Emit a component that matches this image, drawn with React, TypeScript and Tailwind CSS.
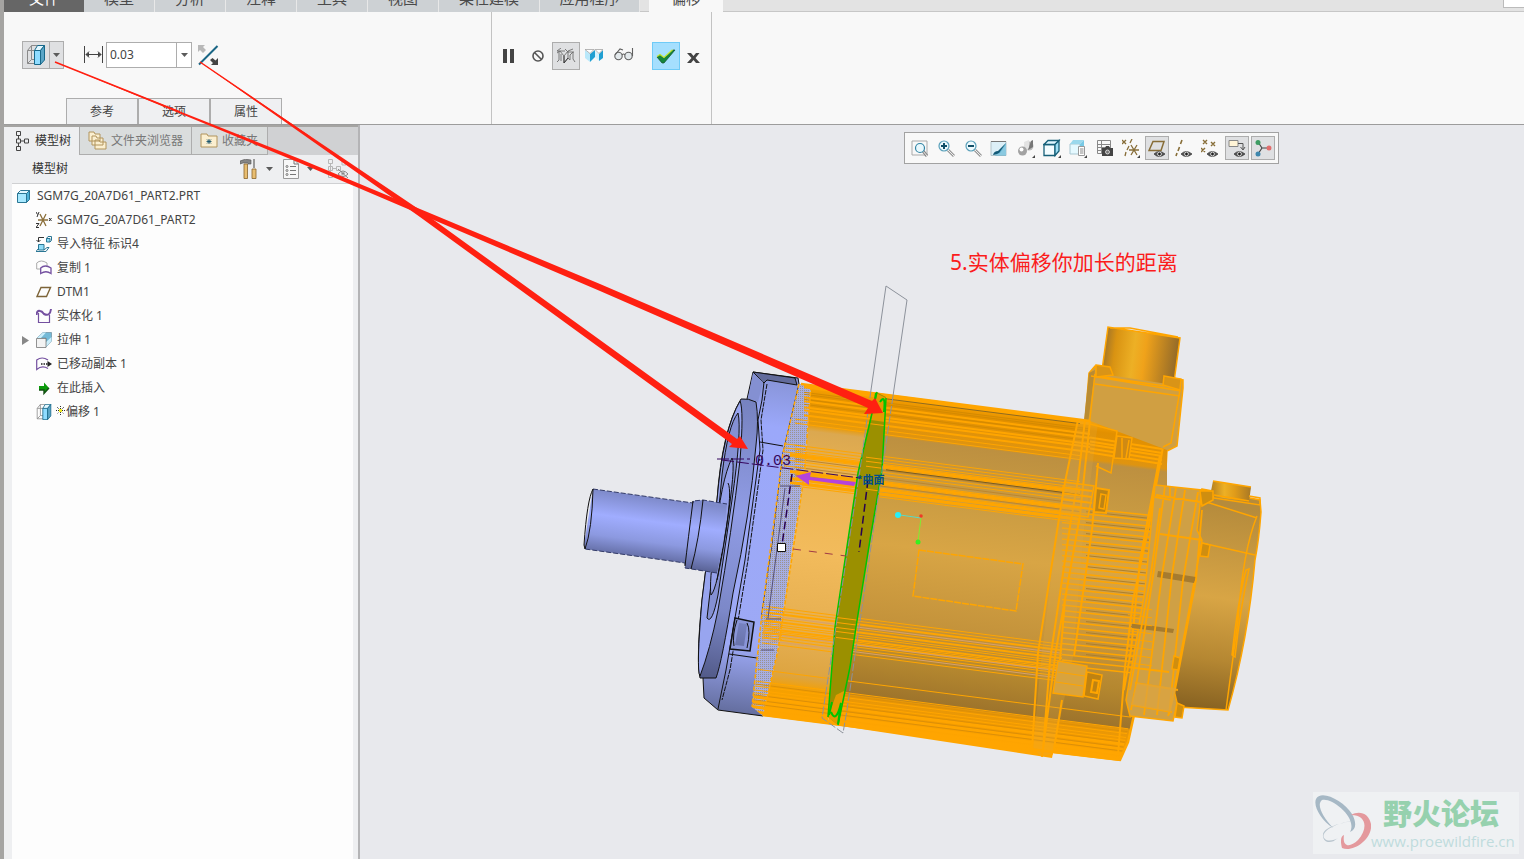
import React from 'react';

const FONT = 'font-["Noto_Sans","Noto_Sans_CJK_SC",sans-serif]';

const ribbonTabs = [
  { label: '模型', width: 'w-[71px]' },
  { label: '分析', width: 'w-[71px]' },
  { label: '注释', width: 'w-[71px]' },
  { label: '工具', width: 'w-[71px]' },
  { label: '视图', width: 'w-[71px]' },
  { label: '柔性建模', width: 'w-[101px]' },
  { label: '应用程序', width: 'w-[100px]' },
];

function OffsetIcon({ size = 18 }: { size?: number }) {
  return (
    <svg width={size} height={size} viewBox="0 0 18 20" fill="none" strokeWidth="1">
      <path d="M.5 5.500 4.500.5H11M.5 5.500V18.500H8M.5 5.500H8M4.500.5V14.500L.5 18.500M4.500 14.500H8" stroke="#8a8a8a" />
      <path d="M7.500 5.500H13.500V19.500H7.500Z" fill="#8fdcff" stroke="#17688a" />
      <path d="M7.500 5.500 10.500.5H17.500L13.500 5.500Z" fill="#e2f7ff" stroke="#17688a" />
      <path d="M13.500 5.500 17.500.5V15L13.500 19.500Z" fill="#5aa5c6" stroke="#17688a" />
    </svg>
  );
}

function Caret({ className = '' }: { className?: string }) {
  return (
    <svg width="7" height="4" viewBox="0 0 7 4" className={className}>
      <path d="M0 0H7L3.500 4Z" fill="#5b5b5b" />
    </svg>
  );
}

function RibbonTabs() {
  return (
    <div className="flex h-3 items-end overflow-hidden bg-[#e3e3e3] text-[15px] leading-5 text-[#4a4a4a]">
      <button className="flex h-full w-20 items-end justify-center bg-[#666] pb-1 text-white">文件</button>
      {ribbonTabs.map((t) => (
        <button key={t.label} className={`flex h-full items-end justify-center border-r border-[#e8e8e8] bg-[#cdd1d4] pb-1 ${t.width}`}>
          {t.label}
        </button>
      ))}
      <div className="h-full w-[9px] border-b border-[#c7c7c7]" />
      <button className="flex h-full w-[74px] items-end justify-center bg-[#f8f8f8] pb-1">偏移</button>
      <div className="flex h-full flex-1 items-start justify-end border-b border-[#c7c7c7]">
        <div className="h-2 w-[21px] border-b border-l border-[#bbb] bg-white" />
      </div>
    </div>
  );
}

function Ribbon() {
  return (
    <div className="flex h-[113px] border-b border-[#9c9c9c] bg-[#f8f8f8]">
      <div className="flex w-[488px] flex-col justify-between border-r border-[#c3c3c3]">
        <div className="flex items-center pt-[29px] pl-[18px]">
          <button aria-label="偏移类型" className="flex h-7 w-[42px] border border-[#adadad] bg-[#dfe0e2]">
            <span className="flex h-full w-[27px] items-center justify-center border-r border-[#adadad]"><OffsetIcon size={20} /></span>
            <span className="flex h-full flex-1 items-center justify-center"><Caret /></span>
          </button>
          <svg width="19" height="17" viewBox="0 0 19 17" className="mr-[3px] mb-[2px] ml-[20px]" fill="none" stroke="#444">
            <path d="M.5 0V17M18.500 0V17M2 8.500H17M5 5.500 2 8.500 5 11.500M14 5.500 17 8.500 14 11.500" />
            <path d="M2 8.500 5 6V11ZM17 8.500 14 6V11Z" fill="#444" stroke="none" />
          </svg>
          <div className="flex h-[26px] w-[86px] border border-[#adadad] bg-white">
            <input aria-label="偏移距离" defaultValue="0.03" className="w-[70px] min-w-0 border-r border-[#adadad] pl-[3px] text-[12px] text-[#444] outline-none" />
            <button aria-label="最近值" className="flex flex-1 items-center justify-center"><Caret /></button>
          </div>
          <button aria-label="反向" className="ml-[6px]">
            <svg width="21" height="21" viewBox="0 0 21 21">
              <path d="M1 19.500 19.500 1" stroke="#1a6685" strokeWidth="2" />
              <path d="M0 0H7L5 2 8 5 5 8 2 5 0 7Z" fill="#b8b8b8" />
              <path d="M20 20H13L15 18 12 15 14.500 13 17.500 15.500 20 13Z" fill="#444" />
            </svg>
          </button>
        </div>
        <div className="flex h-[26px] pl-[62px] text-[12px] text-[#444]">
          {['参考', '选项', '属性'].map((t) => (
            <button key={t} className="w-[72px] border border-b-0 border-[#adadad] bg-[#eff0f2]">{t}</button>
          ))}
        </div>
      </div>
      <div className="flex w-[220px] items-center border-r border-[#c3c3c3] pb-6 pl-[11px]">
        <button aria-label="暂停">
          <svg width="11" height="14"><path d="M0 0H4V14H0ZM7 0H11V14H7Z" fill="#444" /></svg>
        </button>
        <button aria-label="无预览" className="ml-[18px]">
          <svg width="12" height="12" fill="none" stroke="#555" strokeWidth="1.600"><circle cx="6" cy="6" r="5" /><path d="M2.500 2.500 9.500 9.500" /></svg>
        </button>
        <button aria-label="分离预览" className="ml-2 flex h-7 w-7 items-center justify-center border border-[#adadad] bg-[#dfe0e2]">
          <svg width="20" height="16" viewBox="0 0 20 16" fill="none" strokeWidth=".9">
            <path d="M1 3H9M3 3V12L1 14M5 6V13M1 5 4 3 8 8V15L12 10V3L8 8M12 3 17 1M9 1 12 4M11 4H18M17 4V11L19 14M14 12V7L17 4M14 12 12 10M1 3 5 0" stroke="#6d6d6d" />
            <path d="M8 8V15L12 10" stroke="#333" />
          </svg>
        </button>
        <button aria-label="连接预览" className="ml-[5px]">
          <svg width="18" height="14" viewBox="0 0 18 14">
            <path d="M0 1 5 5V13L0 9Z" fill="#b9e8fa" /><path d="M5 5 10 1V8L5 13Z" fill="#209fd2" />
            <path d="M10 2 14 5V12L10 8Z" fill="#d4f3ff" /><path d="M14 5 18 1V9L14 12Z" fill="#209fd2" />
            <path d="M0 .5H9L5 4.500ZM10 .5H18L14 4.500Z" fill="#fff" stroke="#999" strokeWidth=".7" />
          </svg>
        </button>
        <button aria-label="校验" className="ml-[11px] pb-1">
          <svg width="20" height="14" viewBox="0 0 20 14" fill="#e3e9ec" stroke="#606060" strokeWidth="1.100">
            <circle cx="4.500" cy="9" r="3.700" /><circle cx="14.500" cy="9" r="3.700" />
            <path d="M8 8Q9.500 6 11 8M1 8 6 2 9 3M18.500 9V1" fill="none" />
          </svg>
        </button>
        <button aria-label="确定" className="ml-[18px] flex h-7 w-7 items-center justify-center border border-[#6fcbf7] bg-[#a5dffe]">
          <svg width="20" height="15" viewBox="0 0 20 15">
            <path d="M1 8 4 6 8 9 17 1H19L8 14H6Z" fill="#14873c" stroke="#164f2a" strokeWidth=".7" />
            <path d="M1 7.500 4 5.500 8 8.500 16.500.8" fill="none" stroke="#bfe82c" strokeWidth="1.200" />
          </svg>
        </button>
        <button aria-label="取消" className="ml-[7px] pt-[3px]">
          <svg width="13" height="10" viewBox="0 0 13 10"><path d="M0 0H4L6.500 3 9 0H12.500L8.500 5 13 10H9L6.500 7 4 10H0L4.500 5Z" fill="#444" /></svg>
        </button>
      </div>
    </div>
  );
}

function TreeIcon({ kind }: { kind: string }) {
  const common = { width: 16, height: 16, viewBox: '0 0 16 16', fill: 'none', className: 'shrink-0' };
  switch (kind) {
    case 'part':
      return (
        <svg {...common}>
          <path d="M1.500 5.500H10.500V14.500H1.500Z" fill="#a8e9ff" stroke="#2a7694" />
          <path d="M1.500 5.500 4.500 2.500H13.500L10.500 5.500Z" fill="#e1f8ff" stroke="#2a7694" />
          <path d="M10.500 5.500 13.500 2.500V11.500L10.500 14.500Z" fill="#4fb4d8" stroke="#2a7694" />
        </svg>
      );
    case 'csys':
      return (
        <svg {...common}>
          <path d="M2 8H12M4 2 10 14M10 2 4 14" stroke="#8b6f3a" strokeWidth="1.300" />
          <path d="M0 0 1.500 2.500M3 0 1 5M13 6 15.500 9M15.500 6 13 9M0 11.500H3L0 15.500H3" stroke="#333" />
        </svg>
      );
    case 'import':
      return (
        <svg {...common}>
          <path d="M10.500 2.500H14V6H10.500ZM2.500 8.500H8V14H2.500Z" fill="#8edcf8" stroke="#2a7694" />
          <path d="M10.500 2.500 12 .5H15.500V4.500L14 6M8 14 11 11.500H13L10 15.500H0L2 13" stroke="#2a7694" />
          <path d="M8 1.500H2.500V6M.5 4 2.500 6 4.500 4" stroke="#333" />
        </svg>
      );
    case 'copy':
      return (
        <svg {...common}>
          <path d="M.7 9V3Q5-1 11 3V6M.7 9H4" stroke="#aaa" />
          <path d="M4.700 13.500V8Q9 4 15 8V13.500Q10 10 4.700 13.500Z" stroke="#7450a0" strokeWidth="1.300" />
        </svg>
      );
    case 'plane':
      return <svg {...common}><path d="M1 12.500 5 3.500H14.500L10.500 12.500Z" stroke="#7d6438" strokeWidth="1.400" /></svg>;
    case 'solidify':
      return (
        <svg {...common}>
          <path d="M2.500 5V14.500H13.500V7" stroke="#7450a0" strokeWidth="1.200" />
          <path d="M.5 7Q1 2 4 3 6 3 8 6 14 9 15 1" stroke="#7450a0" strokeWidth="2" />
        </svg>
      );
    case 'extrude':
      return (
        <svg {...common}>
          <path d="M1 6 7 .5H15.500V9L10 15V6Z" fill="#74bad7" stroke="#6c8c9c" strokeWidth=".7" />
          <path d="M1 6 7 .5H10L5 6ZM10 15 15.500 9V5L10 10Z" fill="#cbeefb" />
          <path d="M.5 6.500H10V15.500H.5Z" fill="#f3f3f3" stroke="#777" strokeWidth=".8" />
        </svg>
      );
    case 'moved':
      return (
        <svg {...common}>
          <path d="M12 4Q6 0 .7 4V13.500Q6 9 12 12.500" stroke="#7450a0" strokeWidth="1.200" />
          <path d="M5 8H12" stroke="#222" strokeWidth="1.500" strokeDasharray="1.500 1" /><path d="M11.500 5 16 8 11.500 11Z" fill="#222" />
        </svg>
      );
    case 'insert':
      return (
        <svg {...common}>
          <path d="M3 6H8V2.500L13 8 8 13.500V10H3Z" fill="#0b9a0b" /><path d="M3 10H8V13.500L13 8" stroke="#145014" strokeWidth="1.400" />
        </svg>
      );
    default:
      return <OffsetIcon size={16} />;
  }
}

const treeRows = [
  { kind: 'csys', label: 'SGM7G_20A7D61_PART2' },
  { kind: 'import', label: '导入特征 标识4' },
  { kind: 'copy', label: '复制 1' },
  { kind: 'plane', label: 'DTM1' },
  { kind: 'solidify', label: '实体化 1' },
  { kind: 'extrude', label: '拉伸 1', expandable: true },
  { kind: 'moved', label: '已移动副本 1' },
  { kind: 'insert', label: '在此插入' },
  { kind: 'offset', label: '偏移 1', isNew: true },
];

function SidePanel() {
  return (
    <aside className="flex w-[356px] shrink-0 flex-col border-r-2 border-[#b4b4b6] bg-[#eeeff1] text-[12px] text-[#444]">
      <div className="flex h-[30px] border-t-2 border-[#a5a4a2] bg-[#d0d1d3]">
        <button className="flex w-[75px] items-center gap-[6px] bg-[#eeeff1] pl-[11px] text-[#333]">
          <svg width="14" height="20" viewBox="0 0 14 20" fill="none" stroke="#444" className="shrink-0">
            <path d="M1.500.5H5.500V4.500H1.500ZM1.500 8H5.500V12H1.500ZM1.500 15.500H5.500V19.500H1.500ZM9.500 8H13.500V12H9.500ZM3.500 5V8M3.500 12V15M6 10H9" />
          </svg>
          模型树
        </button>
        <button className="flex w-[112px] items-center gap-1 border-b border-l border-[#adadad] bg-[#dadddd] pl-2 text-[#777]">
          <svg width="19" height="19" viewBox="0 0 19 19" fill="#fbefd0" stroke="#b1945c" className="shrink-0">
            <path d="M1 1H6L7 3H12V10H1ZM4 5H8L9 7H15V14H4ZM7 9H11L12 11H18V18H7Z" />
          </svg>
          文件夹浏览器
        </button>
        <button className="flex w-[77px] items-center gap-1 border-x border-b border-[#adadad] bg-[#dadddd] pl-2 text-[#777]">
          <svg width="18" height="15" viewBox="0 0 18 15" fill="#fbefd0" stroke="#b1945c" className="shrink-0">
            <path d="M1 1H7L8 3H17V14H1Z" /><path d="M9 6V11M6.500 8.500H11.500M7 6.500 11 10.500M11 6.500 7 10.500" stroke="#17536b" strokeWidth=".9" />
          </svg>
          收藏夹
        </button>
      </div>
      <div className="mr-px ml-2 flex h-[29px] items-center border-b border-[#cfd0d2]">
        <span className="ml-5 flex-1 text-[#333]">模型树</span>
        <button aria-label="设置">
          <svg width="17" height="20" viewBox="0 0 17 20">
            <path d="M0 2Q5-1 11 1V5H8V4H3L0 5Z" fill="#858585" stroke="#555" strokeWidth=".6" /><path d="M13 0H15V9H13Z" fill="#999" />
            <path d="M4 5H7.500V19.500H4ZM12 10H16V19.500H12Z" fill="#e8bd70" stroke="#8a642c" strokeWidth=".8" />
          </svg>
        </button>
        <button aria-label="设置菜单" className="ml-[9px]"><Caret /></button>
        <button aria-label="显示" className="ml-[10px]">
          <svg width="16" height="20" viewBox="0 0 16 20" fill="none" stroke="#777">
            <path d="M.5.5H11L15.500 5V19.500H.5Z" fill="#f7f7f7" stroke="#999" /><path d="M11 .5V5H15.500M7 7.500H13M7 11.500H13M7 15.500H13" />
            <circle cx="4" cy="7.500" r="1" /><circle cx="4" cy="11.500" r="1" /><circle cx="4" cy="15.500" r="1" />
          </svg>
        </button>
        <button aria-label="显示菜单" className="ml-2"><Caret /></button>
        <button aria-label="隐藏项" className="mr-2 ml-[14px]">
          <svg width="21" height="20" viewBox="0 0 21 20" fill="none" stroke="#b7b7b7">
            <path d="M.5.5H4.500V4.500H.5ZM.5 7.500H4.500V11.500H.5ZM.5 14.500H4.500V18.500H.5ZM8.500 7.500H12.500V11.500H8.500ZM14 2H18V6H14ZM2.500 5V14M5 9.500H8" />
            <path d="M10 15Q15 9 20 15 15 20 10 15ZM10 10 20 19" stroke="#888" /><circle cx="15" cy="14.500" r="1.500" fill="#888" />
          </svg>
        </button>
      </div>
      <ul className="mr-[5px] ml-2 flex-1 bg-[#fdfdfd]">
        <li className="flex h-6 items-center gap-[5px] pl-1"><TreeIcon kind="part" />SGM7G_20A7D61_PART2.PRT</li>
        {treeRows.map((r) => (
          <li key={r.label} className="flex h-6 items-center pl-[9px]">
            <span className="flex w-[15px] shrink-0">
              {r.expandable && <svg width="8" height="9"><path d="M1 0 8 4.500 1 9Z" fill="#888" /></svg>}
            </span>
            <TreeIcon kind={r.kind} />
            {r.isNew && (
              <svg width="9" height="9" viewBox="0 0 9 9" className="mb-1 ml-1">
                <path d="M4.500 0V9M0 4.500H9M1 1 8 8M8 1 1 8" stroke="#333" strokeDasharray="1 1" /><path d="M3 3H6V6H3Z" fill="#f3ee20" />
              </svg>
            )}
            <span className={r.isNew ? 'ml-px' : 'ml-[5px]'}>{r.label}</span>
          </li>
        ))}
      </ul>
    </aside>
  );
}

const eye = (
  <g>
    <path d="M6 15Q11 10 17 15 11 20 6 15Z" fill="#555" stroke="#333" strokeWidth=".7" /><circle cx="11.500" cy="15" r="1.900" fill="#222" stroke="#fff" strokeWidth=".8" />
  </g>
);
const corner = <path d="M18 16V19H15Z" fill="#444" />;

const viewTools: { label: string; pressed?: boolean; art: React.ReactNode }[] = [
  { label: '重新调整', art: <g><path d="M1 2H16V16H1Z" fill="#f8f8f8" stroke="#aaa" /><path d="M12 12 16 17" stroke="#888" strokeWidth="3" /><path d="M12 12 16 17" stroke="#eee" /><circle cx="9" cy="9" r="4.500" fill="#e9f8fd" stroke="#3184a4" strokeWidth="1.200" /></g> },
  { label: '放大', art: <g><path d="M11 11 17 17" stroke="#999" strokeWidth="3" /><path d="M11 11 17 17" stroke="#eee" /><circle cx="7" cy="7" r="5" fill="#edf9fd" stroke="#5aa0ba" strokeWidth="1.200" /><path d="M4 7H10M7 4V10" stroke="#104f68" strokeWidth="2" /></g> },
  { label: '缩小', art: <g><path d="M11 11 17 17" stroke="#999" strokeWidth="3" /><path d="M11 11 17 17" stroke="#eee" /><circle cx="7" cy="7" r="5" fill="#edf9fd" stroke="#5aa0ba" strokeWidth="1.200" /><path d="M4 7H10" stroke="#104f68" strokeWidth="2" /></g> },
  { label: '重画', art: <g><path d="M1 2.500H16V16.500H1Z" fill="#dceff7" stroke="#b3c4ca" /><path d="M16 3V16.500H5L16 4Z" fill="#63b2d0" /><path d="M1 2.500H16" stroke="#777" /><path d="M3 16Q4 12 8 12L16 4 9 14Q6 16 3 16Z" fill="#135a77" /><path d="M10 14 16 5V16H5Z" fill="#8ac9e0" /></g> },
  { label: '渲染选项', art: <g><circle cx="12" cy="7" r="4.500" fill="#bbb" /><path d="M7 3 12 1V9L8 13Z" fill="#e2e2e2" /><circle cx="5.500" cy="12" r="4.500" fill="#a2a2a2" /><circle cx="4.500" cy="10.500" r="2" fill="#fff" /><path d="M14 2 16 1V8L11 11Z" fill="#777" />{corner}</g> },
  { label: '显示样式', art: <g><path d="M1 5.500H12V16.500H1Z" fill="#f3fcff" stroke="#176079" strokeWidth="1.300" /><path d="M1 5.500 5 1.500H16L12 5.500Z" fill="#dff6ff" stroke="#176079" strokeWidth="1.300" /><path d="M12 5.500 16 1.500V12L12 16.500Z" fill="#9ddff5" stroke="#176079" strokeWidth="1.300" />{corner}</g> },
  { label: '已保存方向', art: <g><path d="M1 5H11V15H1Z" fill="#e5f9ff" stroke="#a8c7d2" /><path d="M1 5 4 1H15L11 5Z" fill="#9bd8ec" /><path d="M11 5 15 1V8H11Z" fill="#78c9e5" /><path d="M9.500 7.500H15.500V16.500H9.500Z" fill="#fff" stroke="#999" /><path d="M11 10H14.500M11 12H14.500M11 14H14.500" stroke="#888" />{corner}</g> },
  { label: '视图管理器', art: <g><path d="M1.500 1.500H14.500V14.500H1.500ZM1.500 5.500H14.500M1.500 8.500H14M1.500 11.500H14M5.500 1.500V14" fill="none" stroke="#888" /><path d="M6 9H9L10 7H13L14 9H17V17H6Z" fill="#444" /><circle cx="11.500" cy="13" r="2" fill="#777" stroke="#fff" strokeWidth=".7" /></g> },
  { label: '基准显示', art: <g stroke="#876d37" strokeWidth="1.300" fill="none"><path d="M0 1 4 5M4 1 0 5M10 0 8 4M7 7 5 11M4 13 3 17M7 11H17M9 6 15 16M15 6 9 16" /><path d="M18 16V19H15Z" fill="#444" stroke="none" /></g> },
  { label: '平面显示', pressed: true, art: <g><path d="M1 11.500 5 2.500H16L13 11.500Z" fill="none" stroke="#876d37" strokeWidth="1.500" />{eye}</g> },
  { label: '轴显示', art: <g><path d="M7 1 5.500 5M4.500 8 3 12M2 14 1 17" stroke="#876d37" strokeWidth="1.600" />{eye}</g> },
  { label: '点显示', art: <g><path d="M2 1 6 5M6 1 2 5M10 3 14 7M14 3 10 7M0 9 4 13M4 9 0 13" stroke="#876d37" strokeWidth="1.400" />{eye}</g> },
  { label: '注释显示', pressed: true, art: <g><path d="M1 1.500H10V7.500H1Z" fill="#fff4d6" stroke="#888" /><path d="M10 4.500H15V10M12.500 8 15 11 17 8" fill="none" stroke="#555" />{eye}</g> },
  { label: '旋转中心', pressed: true, art: <g><path d="M4 3 8 9 15 9M8 9 4 15" fill="none" stroke="#444" strokeWidth="1.200" /><circle cx="4" cy="3.500" r="2.500" fill="#3d9c62" /><circle cx="15" cy="9" r="2.500" fill="#e26d6d" /><circle cx="4" cy="15" r="2.500" fill="#3e87ad" /></g> },
];

const SLOPE = 0.128;

function Ribs({ x1, x2, ys, w = 1, color = '#ffa500', slope = SLOPE }: { x1: number; x2: number; ys: number[]; w?: number; color?: string; slope?: number }) {
  return (
    <path
      d={ys.map((y) => `M${x1} ${(y + (x1 - 880) * slope).toFixed(1)}L${x2} ${(y + (x2 - 880) * slope).toFixed(1)}`).join('')}
      stroke={color}
      strokeWidth={w}
      fill="none"
    />
  );
}

const fins = Array.from({ length: 30 }, (_, i) => 487 + i * 5.5);
const finEdges = Array.from({ length: 14 }, (_, i) => 490 + i * 11);

function Motor() {
  return (
    <svg width="1164" height="734" viewBox="360 125 1164 734" className="absolute top-0 left-0" fill="none" aria-hidden="true">
      <defs>
        <linearGradient id="body" gradientUnits="userSpaceOnUse" x1="880" y1="393" x2="839" y2="722">
          <stop offset="0" stopColor="#ffa500" /><stop offset=".035" stopColor="#e29000" /><stop offset=".12" stopColor="#df9410" />
          <stop offset=".13" stopColor="#bd9040" /><stop offset=".28" stopColor="#c99b42" /><stop offset=".45" stopColor="#d8a545" />
          <stop offset=".68" stopColor="#c4933b" /><stop offset=".8" stopColor="#b4872f" /><stop offset=".91" stopColor="#9e742b" />
          <stop offset=".915" stopColor="#e69609" /><stop offset=".96" stopColor="#f29b00" /><stop offset="1" stopColor="#ffa500" />
        </linearGradient>
        <linearGradient id="front" gradientUnits="userSpaceOnUse" x1="880" y1="393" x2="839" y2="722">
          <stop offset="0" stopColor="#ffa500" /><stop offset=".04" stopColor="#e29200" /><stop offset=".12" stopColor="#e89a0a" /><stop offset=".14" stopColor="#dba850" />
          <stop offset=".3" stopColor="#edb552" /><stop offset=".5" stopColor="#f2bb5c" /><stop offset=".8" stopColor="#e2ab4c" />
          <stop offset=".88" stopColor="#dda440" /><stop offset=".92" stopColor="#f5a000" /><stop offset="1" stopColor="#ffa500" />
        </linearGradient>
        <linearGradient id="shaft" gradientUnits="userSpaceOnUse" x1="650" y1="497" x2="641" y2="565">
          <stop offset="0" stopColor="#7e8aca" /><stop offset=".35" stopColor="#a0adff" /><stop offset=".65" stopColor="#8c99e0" /><stop offset="1" stopColor="#545d8e" />
        </linearGradient>
        <linearGradient id="flange" gradientUnits="userSpaceOnUse" x1="770" y1="375" x2="730" y2="712">
          <stop offset="0" stopColor="#8793d6" /><stop offset=".15" stopColor="#9ba8fa" /><stop offset=".8" stopColor="#9da9f5" /><stop offset="1" stopColor="#646e9f" />
        </linearGradient>
        <linearGradient id="disc" gradientUnits="userSpaceOnUse" x1="750" y1="400" x2="706" y2="680">
          <stop offset="0" stopColor="#7682bf" /><stop offset=".4" stopColor="#909ce5" /><stop offset=".75" stopColor="#7c88c8" /><stop offset="1" stopColor="#515987" />
        </linearGradient>
        <linearGradient id="plug" gradientUnits="userSpaceOnUse" x1="1104" y1="345" x2="1179" y2="355">
          <stop offset="0" stopColor="#a0742a" /><stop offset=".15" stopColor="#d99312" /><stop offset=".4" stopColor="#edb025" /><stop offset=".55" stopColor="#f0a21a" /><stop offset="1" stopColor="#8f682a" />
        </linearGradient>
        <linearGradient id="smallPlug">
          <stop offset="0" stopColor="#b27d20" /><stop offset=".35" stopColor="#edb025" /><stop offset=".6" stopColor="#e09c1a" /><stop offset="1" stopColor="#a87825" />
        </linearGradient>
        <linearGradient id="cap" gradientUnits="userSpaceOnUse" x1="1225" y1="505" x2="1199" y2="710">
          <stop offset="0" stopColor="#b58b3c" /><stop offset=".45" stopColor="#d8a545" /><stop offset=".75" stopColor="#b58732" /><stop offset="1" stopColor="#866121" />
        </linearGradient>
        <pattern id="mesh" width="2" height="2" patternUnits="userSpaceOnUse"><rect width="2" height="2" fill="#a7aee2" /><rect width="1" height="1" fill="#9a938f" /></pattern>
        <clipPath id="bodyClip"><path d="M799 384 1090 421 1167 450V486L1160 600 1133 710 1120 761 1053 753 1052 758 1041 757 763 716 752 707Z" /></clipPath>
      </defs>

      <path d="M753 372 798 378 799 384 783 453 772 547 762 613 763 716 718 710 704 698 703 678 735 440 747 399Z" fill="url(#flange)" stroke="#111" />
      <path d="M753 372 764 382 762 400 758 420 760 450 745 560 726 670 718 709" stroke="#111" />
      <path d="M767 384 761 420 763 450 748 560 730 670 722 700" stroke="#111" strokeDasharray="5 1" />
      <path d="M764 383 767 380 797 385 795 378 753 372Z" fill="#626b9b" stroke="#111" />
      <path d="M753 373 763 382 758 402 748 399Z" fill="#8490d2" />
      <path d="M760 442 783 446M729 654 757 658" stroke="#111" />
      <path d="M735 618 754 622 750 651 730 649Z" fill="#8995d8" stroke="#111" strokeWidth="1.500" />
      <path d="M739 623 747 624 744 646 735 645Z" fill="url(#disc)" />
      <path d="M747 623Q751 630 747 648M737 620Q732 635 734 646" stroke="#111" />
      <path d="M741 399Q748 398 756 402 759 420 756 445 750 515 733 593 722 662 716 678L700 678Q696 660 702 600 709 540 717 500 722 430 741 399Z" fill="url(#disc)" stroke="#111" />
      <path d="M740 401Q744 410 740 460 732 530 718 610 710 650 700 676 696 670 702 600 709 540 717 500 723 430 740 401Z" fill="#98a5ef" stroke="#111" />
      <path d="M738 413Q728 425 722 475L715 550 707 618 Q712 625 718 595L732 500Q742 430 738 413Z" fill="#8490d3" stroke="#111" />
      <path d="M732 458Q736 465 726 530 717 590 711 595 709 583 715 540 721 480 732 458Z" fill="#95a1ea" stroke="#111" />
      <path d="M728 483Q732 490 726 530L717 580" stroke="#111" />
      <path d="M593 489 693 503V501L703 500 727 504 723 545 717 573 685 568V563L585 549 584 545Z" fill="url(#shaft)" />
      <path d="M593 489 693 503V501L703 500 727 504M717 573 685 568V563L585 549" stroke="#333b68" strokeDasharray="5 2" />
      <path d="M593 489Q587 500 584 545L585 549Q592 530 593 489M693 501Q688 540 685 566M703 500Q699 540 691 569" stroke="#111" />

      <path d="M799 384 811 386 804 477 792 550 778 650 763 716 752 707 762 613 772 547 783 453Z" fill="url(#mesh)" />
      <path d="M1108 327 1180 338 1174 382 1102 370Z" fill="url(#plug)" />
      <path d="M1102 370 1108 327 1180 338 1174 382M1110 328 1130 328 1178 337" stroke="#ffa500" strokeWidth="1.500" />
      <path d="M1095 366 1183 380V388L1177 446 1167 451 1165 486 1090 480 1085 422 1089 373Z" fill="#d09f42" stroke="#ffa500" strokeWidth="1.500" />
      <path d="M1089 373 1095 370 1088 423 1084 420Z" fill="#b98b33" />
      <path d="M1102 366 1174 377V385L1102 374Z" fill="url(#plug)" />
      <path d="M1091 376 1181 391M1095 384 1180 396M1094 367 1111 370M1164 377 1181 380M1095 374 1087 445M1180 390 1171 443 1163 447M1103 377 1165 386" stroke="#ffa500" strokeWidth="1.500" />
      <path d="M1096 365 1110 367 1113 375 1096 377ZM1164 376 1181 379 1180 390 1163 385Z" fill="#d99417" stroke="#ffa500" strokeWidth="1.500" />

      <path d="M811 386 880 393 866 473 838 627 828 724 763 716 778 650 792 550 804 477Z" fill="url(#front)" />
      <path d="M878 393 1090 421 1167 450 1167 486 1160 600 1135 710 1128 742 1120 761 1053 753 1052 758 828 724 838 627 866 473Z" fill="url(#body)" />

      <g clipPath="url(#bodyClip)">
        <Ribs x1={804} x2={1090} ys={[395, 397, 407, 411, 417, 420, 425]} w={2} />
        <Ribs x1={804} x2={1090} ys={[402, 404, 409, 414]} color="#d48a00" />
        <Ribs x1={886} x2={1080} ys={[398]} color="#8e6a20" />
        <Ribs x1={795} x2={1080} ys={[430, 434, 456, 459, 462, 464, 468, 472, 475, 481, 485, 488, 493, 497]} />
        <Ribs x1={790} x2={1080} ys={[466, 483, 490, 494]} w={3} />
        <Ribs x1={795} x2={1080} ys={[470, 478, 486]} color="#bc8630" />
        <Ribs x1={886} x2={1080} ys={[469]} color="#7b5c20" />
        <Ribs x1={762} x2={1062} ys={[621, 624, 632, 638, 640, 645, 650, 653, 658]} />
        <Ribs x1={762} x2={1062} ys={[627, 635, 643, 647]} w={2} />
        <Ribs x1={762} x2={1062} ys={[630, 648, 655]} color="#d5a071" />
        <Ribs x1={752} x2={1140} ys={[685, 697, 702, 706, 709]} />
        <Ribs x1={752} x2={1130} ys={[713, 718, 723, 728]} w={3} />
        <Ribs x1={752} x2={1130} ys={[700, 711, 716, 720]} color="#dc8f08" />
        <Ribs x1={1062} x2={1162} ys={fins} w={1.500} slope={0.105} />
        <Ribs x1={1086} x2={1158} ys={finEdges} color="#ab7f30" slope={0.105} />
        <Ribs x1={1090} x2={1162} ys={[404, 408, 411, 415, 419]} w={2} slope={0.16} />
        <path d="M1078 420 1098 423 1084 530 1073 657 1053 753 1041 757 1033 747 1042 650 1058 525 1065 482Z" fill="#e0a640" fillOpacity=".25" />
        <path d="M1078 420 1065 482 1058 525 1038 653 1032 750M1090 421 1080 515 1056 650 1042 757M1098 463 1092 530 1074 656M1085 420 1078 480 1071 520 1050 660 1043 750M1163 447 1148 530 1133 600 1125 667 1118 755M1160 455 1140 560 1131 650 1124 690M1062 700 1053 755M1080 515 1065 600 1060 660" stroke="#ffa500" strokeWidth="2" />
      </g>

      <path d="M801 384 1090 421M763 715 1053 752 1120 760 1128 742 1134 715" stroke="#ffa500" strokeWidth="2.500" />
      <path d="M1090 424 1117 431 1111 473 1096 466" stroke="#ffa500" strokeWidth="1.500" />
      <path d="M1117 436 1132 438 1129 459 1114 458ZM1122 438V458M1129 440 1126 458" fill="#cf8a14" stroke="#ffa500" strokeWidth="1.500" />
      <path d="M1065 482 1094 486 1088 517 1060 513Z" fill="#d5a040" fillOpacity=".4" stroke="#ffa500" strokeWidth="1.500" />
      <Ribs x1={1062} x2={1092} ys={[464, 470, 476, 482]} w={2} />
      <path d="M1096 488 1109 490 1106 513 1094 512Z" fill="#bd8415" stroke="#ffa500" strokeWidth="2" />
      <path d="M1101 494 1106 495 1104 509 1099 508Z" stroke="#ffa500" strokeWidth="1.500" />
      <path d="M1058 661 1087 666 1083 697 1053 693Z" fill="#d8a33e" stroke="#ffa500" strokeWidth="1.500" />
      <path d="M1058 672 1085 676M1056 682 1083 686" stroke="#ffa500" />
      <path d="M1087 672 1102 675 1098 699 1084 696Z" fill="#be8212" stroke="#ffa500" strokeWidth="1.500" />
      <path d="M1093 680 1099 681 1097 693 1091 692Z" stroke="#ffa500" strokeWidth="2" />

      <path d="M1155 485 1202 490 1207 500 1201 600 1173 721 1130 716 1126 700 1145 590Z" fill="#cfa045" stroke="#ffa500" strokeWidth="1.500" />
      <path d="M1202 489 1260 500 1261 512Q1259 540 1255 560 1248 640 1228 710L1178 707 1174 690 1202 540 1197 530Z" fill="url(#cap)" stroke="#ffa500" strokeWidth="1.500" />
      <path d="M1213 481 1251 487 1249 502 1210 496Z" fill="url(#smallPlug)" />
      <path d="M1213 481 1251 487M1200 490 1211 492 1214 498 1260 505V498L1249 496M1200 500 1257 518M1214 495 1249 501M1202 543 1255 555M1257 516Q1243 550 1238 620L1226 710M1249 569Q1240 610 1235 657L1232 655Q1238 600 1246 570Z" stroke="#ffa500" strokeWidth="1.500" />
      <path d="M1158 571 1196 577 1194 583 1157 577ZM1132 623 1174 629 1173 633 1132 628Z" fill="#a67b2e" />
      <path d="M1165 486 1154 570 1137 680 1131 710M1176 488 1162 575 1144 715M1185 490 1172 575 1157 715M1198 492 1183 580 1169 715M1202 510 1196 580 1175 690 1168 716M1160 534 1202 540M1127 667 1169 672M1135 683 1178 690M1132 705 1172 712M1156 495 1200 502M1160 508 1150 580 1130 690M1170 487V500L1155 497" stroke="#ffa500" strokeWidth="1.800" />
      <Ribs x1={1128} x2={1152} ys={[575, 583, 591, 599, 607, 615, 623, 631]} />
      <path d="M1137 683 1176 688 1171 712 1131 705Z" fill="#dba441" fillOpacity=".7" />
      <path d="M1202 543 1210 545 1208 557 1200 556ZM1174 656 1180 658 1178 670 1172 669ZM1177 703 1184 706 1182 718 1175 717ZM1200 491H1213V500L1202 506Z" fill="#cf8e10" stroke="#ffa500" strokeWidth="1.500" />

      <path d="M919 550 1023 564 1016 611 913 596Z" stroke="#ffa500" strokeWidth="1.500" strokeDasharray="7 1" />
      <path d="M799 384 783 453 762 613 752 707M811 386 804 477 778 650 763 716" stroke="#ffa500" strokeWidth="1.500" strokeDasharray="4 2" />
      <Ribs x1={784} x2={806} ys={[456, 460, 464, 468, 472, 478]} />
      <Ribs x1={762} x2={782} ys={[624, 630, 636, 641, 648, 652]} />
      <path d="M876 392 886 397 882 470 870 540 856 627 850 667 838 725 828 717 835 627 858 473Z" fill="#9b9000" />
      <path d="M876 393 886 398 885 422 871 420ZM836 695 846 690 838 725 828 717Z" fill="#e59a00" />
      <Ribs x1={866} x2={884} ys={[425, 459, 463, 468, 491]} w={1} />
      <Ribs x1={836} x2={857} ys={[623, 628, 633, 637, 643]} w={1} />
      <path d="M877 392 858 473 835 627 828 717M886 398 882 470 870 540 856 627 850 667 838 725" stroke="#00c400" strokeWidth="1.500" />
      <path d="M874 405 876 393M880 402Q886 393 884 412M829 715 832 702M831 712Q836 724 841 703L838 724" stroke="#00c400" strokeWidth="2" />
      <path d="M871 390 886 286 907 300 893 396" stroke="#8d929b" />
      <path d="M871 390 860 470 822 718 843 733 847 710 893 396" stroke="#8d929b" strokeDasharray="8 2" />

      <path d="M717 459H750M722 460 860 478" stroke="#35045c" strokeDasharray="12 3" />
      <path d="M868 480 859 552M792 474 782 545" stroke="#28004f" strokeWidth="1.500" strokeDasharray="8 4" />
      <path d="M780 486H800M785 488 768 618M766 619H781M761 650H774" stroke="#555078" />
      <path d="M793 549 846 556" stroke="#a03a45" strokeDasharray="8 8" />
      <path d="M796 476 811 472 810 477 856 482 854 486 809 480V485Z" fill="#b544da" />
      <path d="M777.500 543.500H785.500V551.500H777.500Z" fill="#fff" stroke="#111" />
      <path d="M900 515 921 518" stroke="#56dbc7" /><path d="M921 518 918 541" stroke="#80ec31" />
      <circle cx="898" cy="515" r="3" fill="#28eff8" /><circle cx="918" cy="542" r="2.500" fill="#36f020" /><circle cx="921" cy="516" r="1.800" fill="#ef3b25" />
      <text x="755" y="465" fontSize="15" fill="#36055d" fontFamily="Liberation Mono, monospace">0.03</text>
      <text x="857" y="484" fontSize="11" fontWeight="700" fill="#004d89" fontFamily="Noto Sans CJK SC, sans-serif">*曲面</text>
    </svg>
  );
}

function Watermark() {
  return (
    <div className="absolute right-[5px] bottom-[5px] flex h-[62px] w-[206px] overflow-hidden bg-[#eff1f3]">
      <svg width="58" height="62" viewBox="0 0 58 62" className="shrink-0">
        <path d="M20 36C8 28 0 14 3 7 8-3 31 9 39 22 44 31 43 38 37 40 45 25 18 5 9 8 3 13 10 25 20 36Z" fill="#a6b8c5" />
        <path d="M38 23C46 18 56 21 58 32 60 47 40 61 29 56 27 48 28 44 31 43 29 55 37 56 45 48 55 37 54 23 38 23Z" fill="#e4999d" />
        <path d="M40 29C25 30 5 40 12 47 15 50 22 48 25 46 16 54 9 49 10 42 12 35 27 31 40 29Z" fill="#b9c5ce" />
      </svg>
      <div className="flex flex-col">
        <div className="pl-3 font-['Noto_Sans_CJK_SC',sans-serif] text-[29px] leading-10 font-black text-[#96d1ae]">野火论坛</div>
        <div className="font-['Open_Sans',sans-serif] text-[15px] leading-[18px] text-[#bfdcdd]">www.proewildfire.cn</div>
      </div>
    </div>
  );
}

export default function App() {
  return (
    <div className={`relative flex min-h-screen flex-col overflow-hidden border-l-4 border-[#a5a4a2] bg-[#e8e9ed] ${FONT}`}>
      <RibbonTabs />
      <Ribbon />
      <div className="flex flex-1">
        <SidePanel />
        <main className="relative min-w-0 flex-1 overflow-hidden bg-[#e8e9ed]">
          <Motor />
          <div className="absolute top-[7px] left-[544px] flex h-8 w-[375px] items-center justify-between border border-[#a2a2a2] bg-[#f8f8f8] px-[3px]">
            {viewTools.map((t) => (
              <button key={t.label} aria-label={t.label} aria-pressed={t.pressed} className={`flex h-6 w-6 items-center justify-center ${t.pressed ? 'border border-[#adadad] bg-[#dfe0e2]' : ''}`}>
                <svg width="18" height="19" viewBox="0 0 18 19" fill="none" className="shrink-0">{t.art}</svg>
              </button>
            ))}
          </div>
          <p className="absolute top-[123px] left-[590px] text-[21px] leading-7 whitespace-nowrap text-[#fb1c1c]">5.实体偏移你加长的距离</p>
          <Watermark />
        </main>
      </div>
      <svg width="1520" height="859" viewBox="4 0 1520 859" className="pointer-events-none absolute top-0 left-0" aria-hidden="true">
        <path d="M55 62 300 159 600 284 872 401 875 398 883 413 864 414 868 408 600 291 300 163Z" fill="#ff2011" />
        <path d="M200 62 420 210 737 439 740 436 748 449 729 447 732 444 420 217Z" fill="#ff2011" />
        <path d="M55 62 180 112M200 62 310 137" stroke="#ff2011" strokeWidth="1.500" />
      </svg>
    </div>
  );
}
